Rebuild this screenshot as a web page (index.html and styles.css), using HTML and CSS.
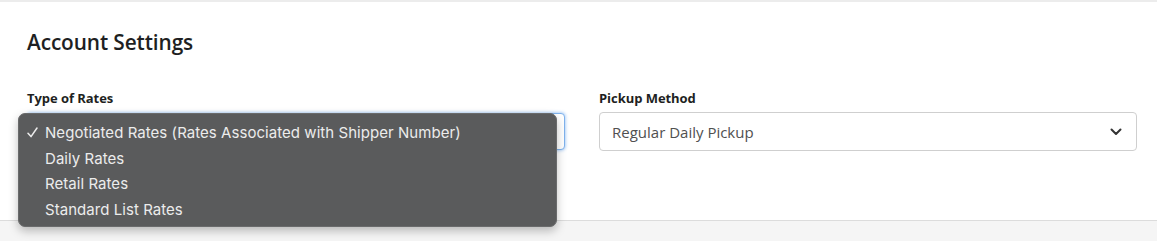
FILE: index.html
```html
<!DOCTYPE html>
<html>
<head>
<meta charset="utf-8">
<link rel="stylesheet" href="styles.css">
</head>
<body>
<div class="page">
  <section class="card">
    <h2 class="title">Account Settings</h2>
    <div class="fields">
      <div class="field">
        <label class="label">Type of Rates</label>
        <div class="select-wrap">
          <div class="select focused"></div>
          <ul class="menu">
            <li class="item checked"><span class="check"><svg width="11" height="11" viewBox="0 0 11 11"><path d="M1 6.2 L4 9.6 L10 1" fill="none" stroke="#ececec" stroke-width="1.5" stroke-linecap="round" stroke-linejoin="round"/></svg></span>Negotiated Rates (Rates Associated with Shipper Number)</li>
            <li class="item"><span class="check"></span>Daily Rates</li>
            <li class="item"><span class="check"></span>Retail Rates</li>
            <li class="item"><span class="check"></span>Standard List Rates</li>
          </ul>
        </div>
      </div>
      <div class="field">
        <label class="label">Pickup Method</label>
        <div class="select">
          <span class="value">Regular Daily Pickup</span>
          <svg class="chev" width="12" height="8" viewBox="0 0 12 8"><path d="M1.5 1.5 L6 6 L10.5 1.5" fill="none" stroke="#333" stroke-width="2" stroke-linecap="round" stroke-linejoin="round"/></svg>
        </div>
      </div>
    </div>
  </section>
  <div class="footer-band"></div>
</div>
</body>
</html>
```
FILE: styles.css
```css
* { box-sizing: border-box; }
html, body { margin: 0; padding: 0; }
body {
  background: #f5f5f5;
  font-family: "Open Sans", "Liberation Sans", sans-serif;
  color: #222;
  width: 1157px;
  height: 241px;
  overflow: hidden;
}
.page { display: flex; flex-direction: column; }
.card {
  background: #fff;
  border-top: 2px solid #ececec;
  border-bottom: 1px solid #dcdcdc;
  height: 221px;
  padding: 27px 20px 0 27px;
}
.title {
  margin: 0;
  font-size: 20.8px;
  font-weight: 600;
  line-height: 26px;
  color: #1e1f22;
  letter-spacing: -0.1px;
}
.fields {
  display: grid;
  grid-template-columns: 538px 538px;
  column-gap: 34px;
  margin-top: 35px;
}
.field { display: flex; flex-direction: column; }
.label {
  font-size: 13px;
  font-weight: 700;
  line-height: 16px;
  color: #1e1f22;
  margin-bottom: 6px;
  letter-spacing: -0.05px;
}
.select-wrap { position: relative; }
.select {
  height: 39px;
  border: 1px solid #cfcfcf;
  border-radius: 4px;
  display: flex;
  align-items: center;
  justify-content: space-between;
  padding: 0 14px 0 12px;
  font-size: 15px;
  color: #505050;
  background: #fff;
}
.select.focused {
  border-color: #7fb2ec;
  box-shadow: 0 0 3px 1px rgba(90,160,240,0.45);
  height: 37px;
  margin-top: 1px;
}
.menu {
  position: absolute;
  left: -9px;
  top: 1px;
  width: 539px;
  height: 114px;
  margin: 0;
  padding: 6px 0 0 0;
  list-style: none;
  background: #5a5b5c;
  border: 1px solid #6a6b6c;
  border-radius: 7px;
  box-shadow: 0 4px 10px rgba(0,0,0,0.25);
  font-family: "Inter", "Noto Sans", sans-serif;
  font-size: 15px;
  letter-spacing: 0.05px;
  color: #ececec;
}
.item {
  display: flex;
  align-items: center;
  height: 25.6px;
  padding-left: 8px;
}
.check { width: 18px; flex: none; display: flex; align-items: center; }
.chev { flex: none; }
.footer-band { height: 20px; background: #f5f5f5; }
```
